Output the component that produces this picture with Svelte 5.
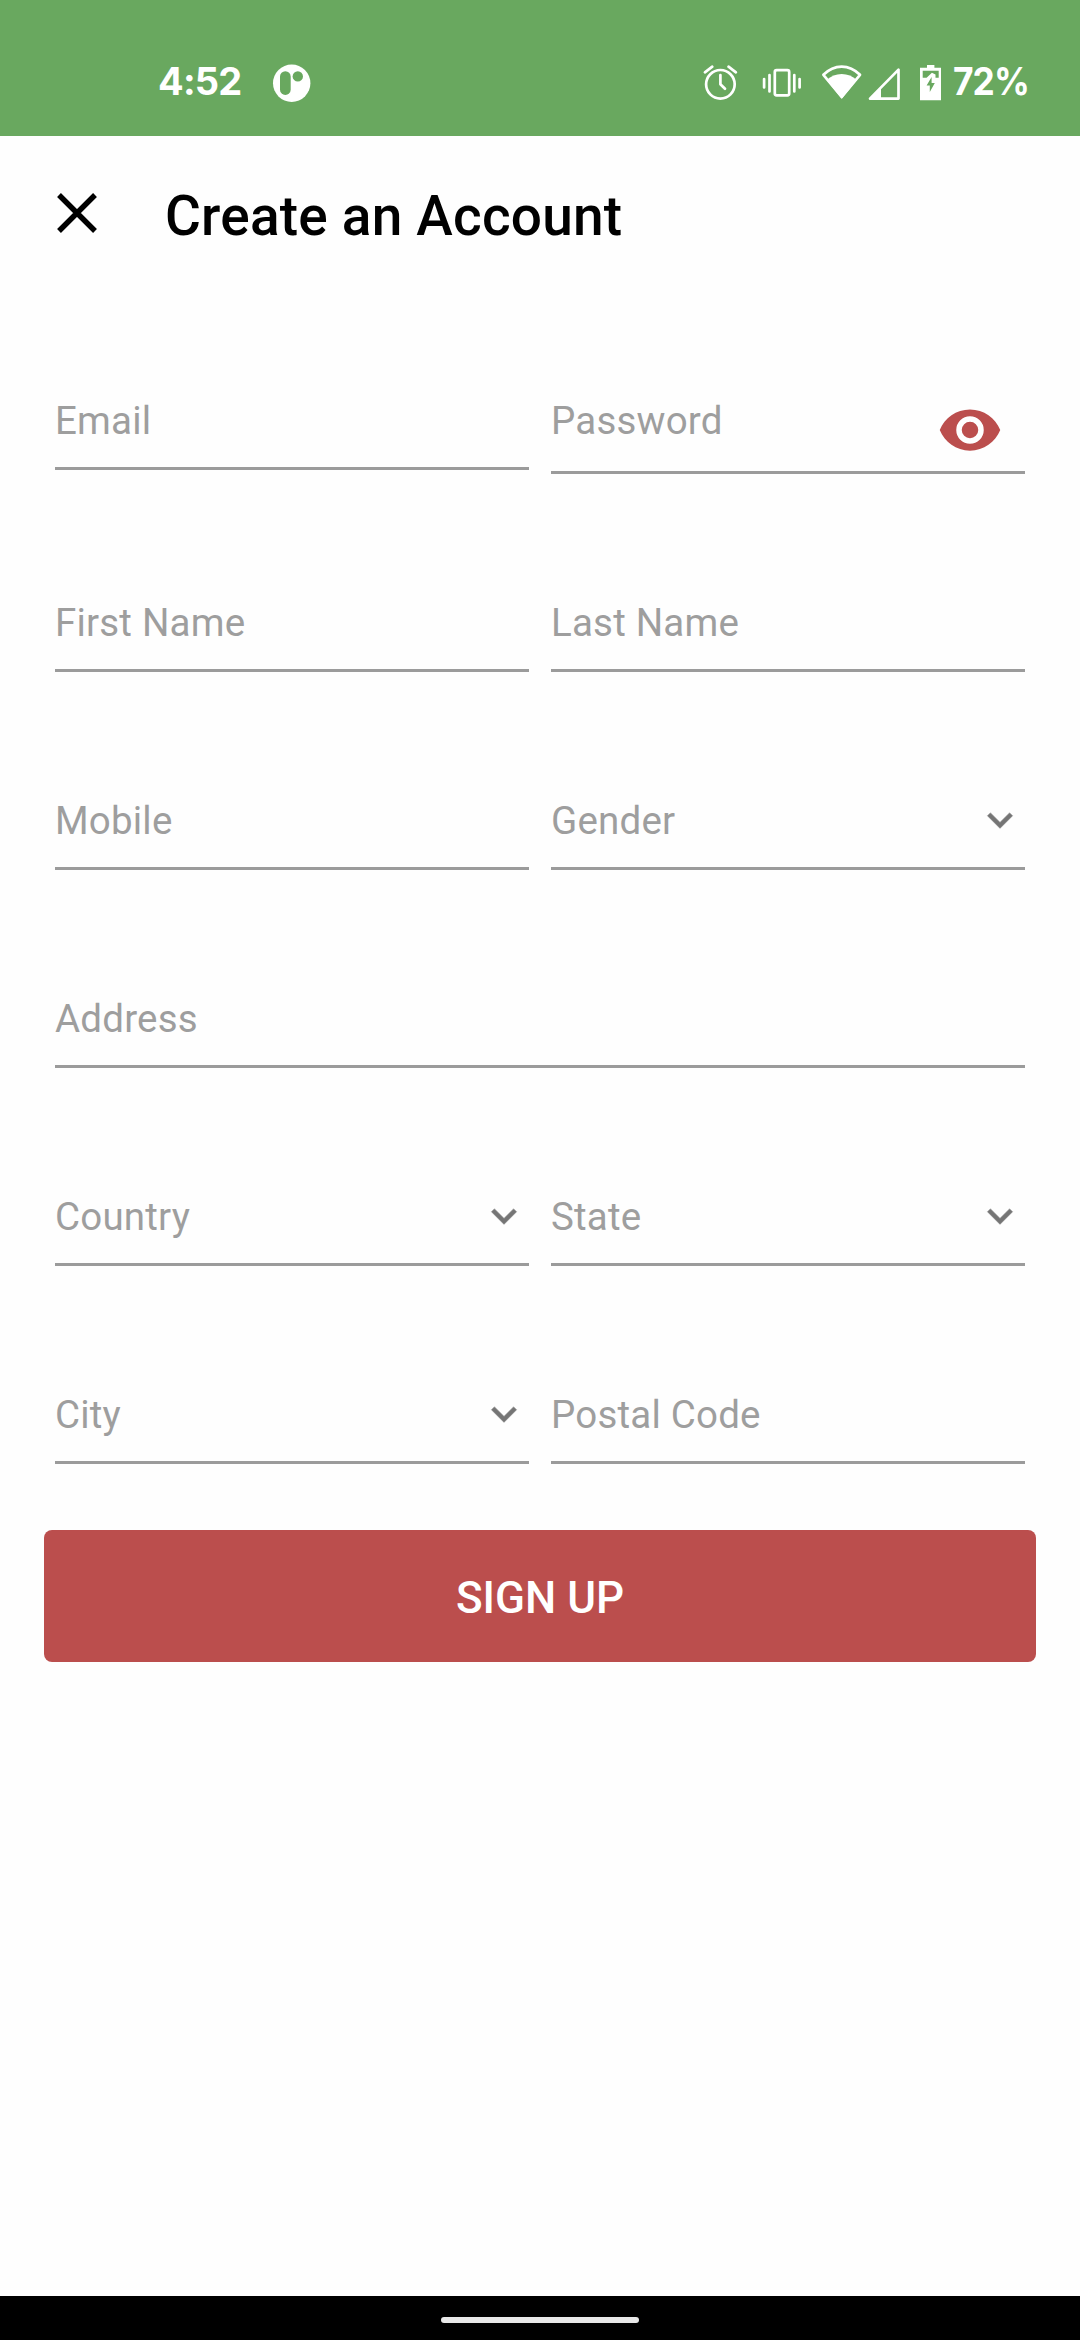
<script>
  let rows = [
    [{ label: "Email" }, { label: "Password", type: "password" }],
    [{ label: "First Name" }, { label: "Last Name" }],
    [{ label: "Mobile" }, { label: "Gender", type: "select" }],
    [{ label: "Address" }],
    [
      { label: "Country", type: "select" },
      { label: "State", type: "select" },
    ],
    [{ label: "City", type: "select" }, { label: "Postal Code" }],
  ];
</script>

<div class="screen">
  <div class="status">
    <span class="status__time">4:52</span>
    <svg class="status__app" width="40" height="40" viewBox="272 63 40 40">
      <circle cx="291.7" cy="83.2" r="18.7" fill="#fff" />
      <rect x="280" y="71.3" width="10.7" height="23.6" rx="5.3" fill="#69a85f" />
      <circle cx="297.8" cy="76.4" r="5.2" fill="#69a85f" />
    </svg>

    <div class="status__icons">
      <svg width="38" height="40" viewBox="702 63 38 40" class="line">
        <circle cx="720.4" cy="84.3" r="14.3" />
        <path d="M704.9 72.3l7.4-5.6M735.9 72.3l-7.4-5.6M720.4 75v9.2l4.6 4.6" />
      </svg>
      <svg class="line vibrate" width="40" height="40" viewBox="762 63 40 40">
        <rect x="774.8" y="70.2" width="14.4" height="25.2" rx="1.8" />
        <path d="M764.1 79v8.5M769.5 75v16.5M794.3 75v16.5M799.6 79v8.5" />
      </svg>
      <svg class="wifi" width="42" height="40" viewBox="821 63 42 40">
        <path
          class="line"
          d="M841.7 97L823.4 74.8Q831.6 66.6 841.7 66.6T860 74.8z"
        />
        <path fill="#fff" d="M841.7 98.7L826.6 80Q833 74 841.7 74T856.8 80z" />
      </svg>
      <svg class="signal" width="34" height="40" viewBox="867 63 34 40">
        <path class="line" d="M870 98.6L898.5 69.6V98.6z" />
        <path fill="#fff" d="M869 99.5L881 87.5V99.5z" />
      </svg>
      <svg class="battery" width="23" height="40" viewBox="919 63 23 40">
        <path fill="#fff" d="M927 65h7.4v2.7h6.6v32.6h-21V67.7h7z" />
        <path
          fill="#69a85f"
          d="M922.7 70.7h16v7.1h-3.2v-3.2l-3.6-1.8-5.3 5h-3.9z"
        />
        <path fill="#69a85f" d="M931.6 77L926.6 85.5h3.2v6.6l5-9.2h-3.2z" />
      </svg>
      <span class="status__level">72%</span>
    </div>
  </div>

  <header class="header">
    <svg class="header__close" width="40" height="40" viewBox="0 0 40 40">
      <path d="M2 2L38 38M38 2L2 38" stroke="#000" stroke-width="5.4" />
    </svg>
    <h1>Create an Account</h1>
  </header>

  <form class="form">
    {#each rows as row}
      <div class="form__row">
        {#each row as field}
          <div class="field" class:field--password={field.type === "password"}>
            <span>{field.label}</span>
            {#if field.type === "password"}
              <svg class="field__eye" width="66" height="66" viewBox="0 0 24 24">
                <path
                  d="M12 9a3 3 0 0 0-3 3 3 3 0 0 0 3 3 3 3 0 0 0 3-3 3 3 0 0 0-3-3m0 8a5 5 0 0 1-5-5 5 5 0 0 1 5-5 5 5 0 0 1 5 5 5 5 0 0 1-5 5m0-12.5C7 4.5 2.73 7.61 1 12c1.73 4.39 6 7.5 11 7.5s9.27-3.11 11-7.5c-1.73-4.39-6-7.5-11-7.5z"
                />
              </svg>
            {:else if field.type === "select"}
              <svg class="field__arrow" width="50" height="50" viewBox="0 0 24 24">
                <path d="M7.41 8.59L12 13.17l4.59-4.58L18 10l-6 6-6-6z" />
              </svg>
            {/if}
          </div>
        {/each}
      </div>
    {/each}
    <button type="button" class="submit">SIGN UP</button>
  </form>

  <div class="navbar"><div class="navbar__pill"></div></div>
</div>

<style>
  :global(body) {
    margin: 0;
    background: #fefefe;
  }

  svg {
    display: block;
    flex: none;
  }

  .screen {
    display: flex;
    flex-direction: column;
    width: 1080px;
    height: 2340px;
    overflow: hidden;
    background: #fefefe;
    font-family: Roboto, sans-serif;
  }

  .status {
    display: flex;
    align-items: flex-start;
    box-sizing: border-box;
    height: 136px;
    padding: 63px 54px 0 158px;
    background: #69a85f;
    color: #fff;
    font: 700 38px/36px Inter, sans-serif;
  }
  .status__time {
    width: 114px;
    letter-spacing: -0.8px;
  }
  .status__icons {
    display: flex;
    margin-left: auto;
  }
  .status__level {
    width: 73px;
    margin-left: 11px;
    letter-spacing: -1px;
    white-space: nowrap;
    transform: scaleX(0.93);
    transform-origin: left;
  }
  .line {
    fill: none;
    stroke: #fff;
    stroke-width: 2.7;
    stroke-linecap: round;
    stroke-linejoin: round;
  }
  .vibrate {
    margin-left: 22px;
  }
  .wifi {
    margin-left: 19px;
  }
  .signal {
    margin-left: 4px;
  }
  .battery {
    margin-left: 18px;
  }

  .header {
    display: flex;
    align-items: center;
    height: 160px;
    padding-left: 57px;
  }
  .header__close {
    margin-top: -6px;
  }
  h1 {
    margin: 0 0 0 68px;
    font-size: 55px;
    font-weight: 500;
    line-height: 64px;
    letter-spacing: 0.2px;
    color: #000;
  }

  .form {
    display: flex;
    flex-direction: column;
    flex: 1;
    padding: 0 44px;
  }
  .form__row {
    display: flex;
    align-items: flex-start;
    gap: 22px;
    padding: 76px 11px 0;
  }
  .form__row + .form__row {
    padding-top: 100px;
  }
  .field {
    display: flex;
    flex: 1;
    box-sizing: border-box;
    height: 98px;
    padding-top: 25px;
    border-bottom: 3px solid #9b9b9b;
    color: #9e9e9e;
    font-size: 38.5px;
    line-height: 48px;
    letter-spacing: 0.2px;
  }
  .field--password {
    height: 102px;
  }
  .field span {
    flex: 1;
  }
  .field__eye {
    margin: 0 22px 0 0;
    fill: #bb4e4d;
  }
  .field__arrow {
    margin-top: -2px;
    fill: #757575;
    stroke: #757575;
    stroke-width: 0.3;
    stroke-linejoin: round;
  }

  .submit {
    height: 132px;
    margin-top: 66px;
    padding: 3px 0 0;
    border: 0;
    border-radius: 8px;
    background: #bb4e4d;
    color: #fff;
    font: 500 44px/52px Roboto, sans-serif;
  }

  .navbar {
    display: flex;
    justify-content: center;
    height: 44px;
    background: #000;
  }
  .navbar__pill {
    width: 198px;
    height: 6px;
    margin-top: 21px;
    border-radius: 3px;
    background: #e8e8e8;
  }
</style>
